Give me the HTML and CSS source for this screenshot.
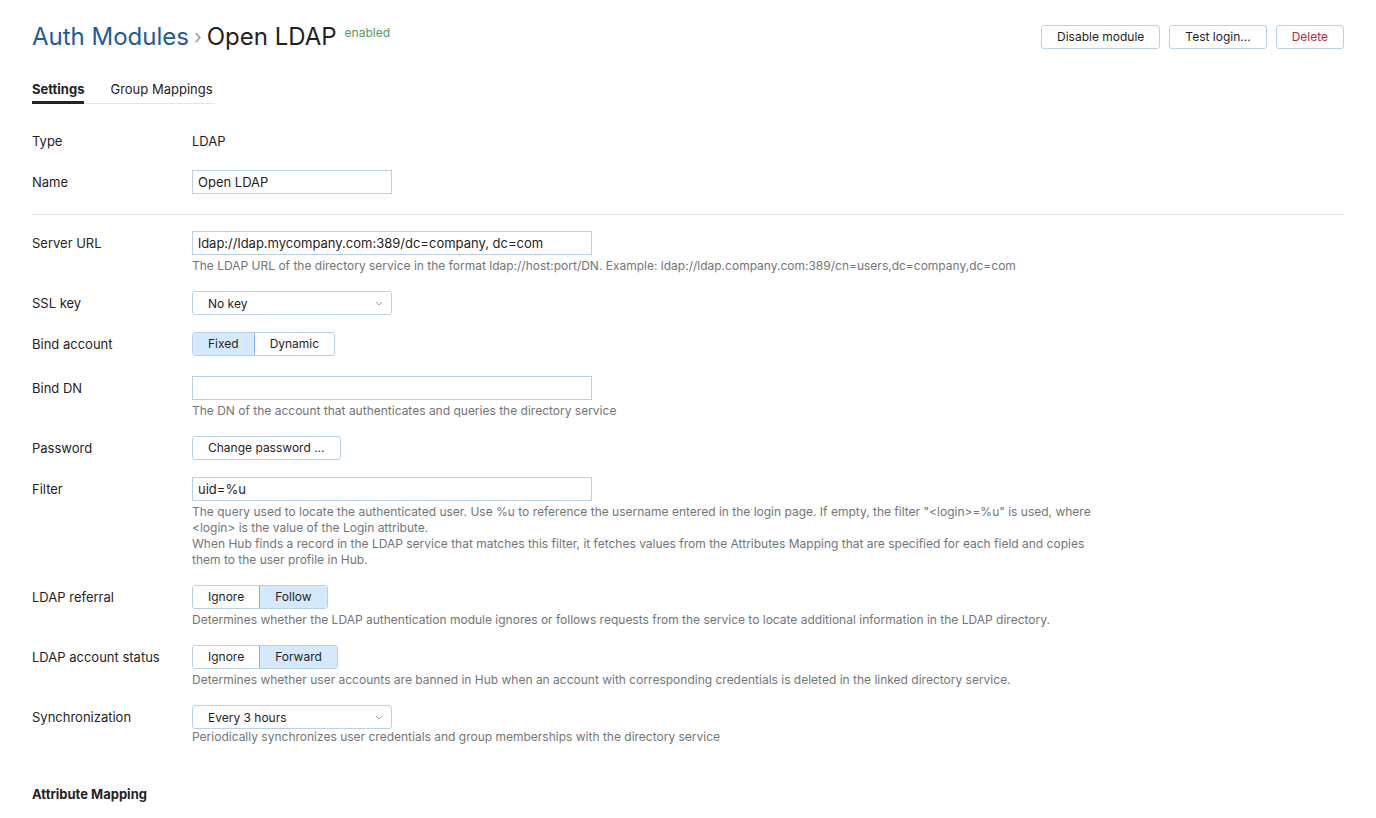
FILE: index.html
```html
<!DOCTYPE html>
<html>
<head>
<title>Open LDAP - Auth Modules</title>
<link rel="stylesheet" href="styles.css">
</head>
<body>

<div class="page">
  <header class="header">
    <h1 class="title">
      <a class="crumb" href="#">Auth Modules</a>
      <span class="sep">›</span>
      <span>Open LDAP</span>
      <span class="status">enabled</span>
    </h1>
    <div class="actions">
      <button class="btn">Disable module</button>
      <button class="btn">Test login...</button>
      <button class="btn danger">Delete</button>
    </div>
  </header>

  <nav class="tabs">
    <a class="tab active" href="#">Settings</a>
    <a class="tab" href="#">Group Mappings</a>
  </nav>

  <div class="form">
    <div class="row">
      <div class="label">Type</div>
      <div class="value text">LDAP</div>
    </div>
    <div class="row">
      <div class="label">Name</div>
      <div class="value"><input class="input short" type="text" value="Open LDAP"></div>
    </div>

    <hr class="divider">

    <div class="row">
      <div class="label">Server URL</div>
      <div class="value">
        <input class="input" type="text" value="ldap://ldap.mycompany.com:389/dc=company, dc=com">
        <div class="help">The LDAP URL of the directory service in the format ldap://host:port/DN. Example: ldap://ldap.company.com:389/cn=users,dc=company,dc=com</div>
      </div>
    </div>
    <div class="row">
      <div class="label">SSL key</div>
      <div class="value">
        <button class="select">No key <svg class="chevron" width="8" height="5" viewBox="0 0 8 5"><path d="M1 1l3 3 3-3" fill="none" stroke="#9aa1a8" stroke-width="1"/></svg></button>
      </div>
    </div>
    <div class="row bind">
      <div class="label">Bind account</div>
      <div class="value">
        <div class="group">
          <button class="seg on">Fixed</button>
          <button class="seg">Dynamic</button>
        </div>
      </div>
    </div>
    <div class="row">
      <div class="label">Bind DN</div>
      <div class="value">
        <input class="input" type="text" value="">
        <div class="help">The DN of the account that authenticates and queries the directory service</div>
      </div>
    </div>
    <div class="row">
      <div class="label">Password</div>
      <div class="value"><button class="btn">Change password ...</button></div>
    </div>
    <div class="row">
      <div class="label">Filter</div>
      <div class="value">
        <input class="input" type="text" value="uid=%u">
        <div class="help">The query used to locate the authenticated user. Use %u to reference the username entered in the login page. If empty, the filter "&lt;login&gt;=%u" is used, where &lt;login&gt; is the value of the Login attribute.<br>When Hub finds a record in the LDAP service that matches this filter, it fetches values from the Attributes Mapping that are specified for each field and copies them to the user profile in Hub.</div>
      </div>
    </div>
    <div class="row">
      <div class="label">LDAP referral</div>
      <div class="value">
        <div class="group">
          <button class="seg">Ignore</button>
          <button class="seg on">Follow</button>
        </div>
        <div class="help">Determines whether the LDAP authentication module ignores or follows requests from the service to locate additional information in the LDAP directory.</div>
      </div>
    </div>
    <div class="row">
      <div class="label">LDAP account status</div>
      <div class="value">
        <div class="group">
          <button class="seg">Ignore</button>
          <button class="seg on">Forward</button>
        </div>
        <div class="help">Determines whether user accounts are banned in Hub when an account with corresponding credentials is deleted in the linked directory service.</div>
      </div>
    </div>
    <div class="row">
      <div class="label">Synchronization</div>
      <div class="value">
        <button class="select">Every 3 hours <svg class="chevron" width="8" height="5" viewBox="0 0 8 5"><path d="M1 1l3 3 3-3" fill="none" stroke="#9aa1a8" stroke-width="1"/></svg></button>
        <div class="help tight">Periodically synchronizes user credentials and group memberships with the directory service</div>
      </div>
    </div>
  </div>

  <h3 class="section-title">Attribute Mapping</h3>
</div>

</body>
</html>
```

FILE: styles.css
```css
body {
  margin: 0;
  font-family: Inter, "Noto Sans", sans-serif;
  font-size: 13px;
  color: #1f2326;
  background: #fff;
}

.page { padding: 25px 32px 0 32px; }

.header {
  display: flex;
  justify-content: space-between;
  align-items: flex-start;
}

.title {
  margin: 0;
  font-size: 24px;
  font-weight: 400;
  line-height: 24px;
  display: flex;
  align-items: flex-start;
}
.crumb { color: #1d5b9c; text-decoration: none; }
.sep { color: #9aa1a8; font-size: 20px; margin: 0 5px 0 5px; }
.status {
  color: #4d9a5f;
  font-size: 12px;
  line-height: 14px;
  margin: 1px 0 0 8px;
}

.actions { display: flex; gap: 9px; }

button { font-family: inherit; font-size: 12px; color: #1f2326; }

.btn {
  height: 24px;
  padding: 0 15px;
  background: #fff;
  border: 1px solid #b8d1e5;
  border-radius: 3px;
  line-height: 22px;
}
.btn.danger { color: #c22a43; }

.tabs {
  display: inline-flex;
  gap: 26px;
  margin-top: 32px;
  padding-right: 2px;
  border-bottom: 1px solid #dfe5eb;
}
.tab {
  color: #1f2326;
  text-decoration: none;
  line-height: 16px;
  padding-bottom: 4px;
  border-bottom: 3px solid transparent;
  margin-bottom: -1px;
}
.tab.active { font-weight: 700; border-bottom-color: #1f2326; }

.form { margin-top: 25px; }

.row {
  display: grid;
  grid-template-columns: 160px 1fr;
  margin-bottom: 17px;
}
.row.bind { margin-bottom: 20px; }
.label { line-height: 24px; }
.value.text { line-height: 24px; }

.divider {
  border: 0;
  border-top: 1px solid #dfe5eb;
  margin: 20px 0 16px;
}

.input {
  box-sizing: border-box;
  display: block;
  width: 400px;
  height: 24px;
  padding: 0 5px;
  border: 1px solid #b8d1e5;
  border-radius: 0;
  font-family: inherit;
  font-size: 13px;
  color: #1f2326;
  outline: none;
}
.input.short { width: 200px; }

.select {
  box-sizing: border-box;
  display: flex;
  align-items: center;
  justify-content: space-between;
  width: 200px;
  height: 24px;
  padding: 0 8px 0 15px;
  background: #fff;
  border: 1px solid #b8d1e5;
  border-radius: 3px;
  text-align: left;
}

.group {
  display: inline-flex;
  border: 1px solid #b8d1e5;
  border-radius: 3px;
  overflow: hidden;
}
.seg {
  height: 22px;
  padding: 0 15px;
  background: #fff;
  border: 0;
  border-left: 1px solid #b8d1e5;
  line-height: 22px;
}
.seg:first-child { border-left: 0; }
.seg.on { background: #d4eafc; }
.group .seg.on + .seg, .group .seg.on:not(:first-child) { border-left-color: #7fb7e6; }

.help {
  margin-top: 3px;
  max-width: 900px;
  font-size: 12px;
  line-height: 16px;
  color: #737577;
}
.help.tight { margin-top: 0; }

.section-title {
  margin: 41px 0 0;
  font-size: 13px;
  font-weight: 700;
  line-height: 16px;
}
```
